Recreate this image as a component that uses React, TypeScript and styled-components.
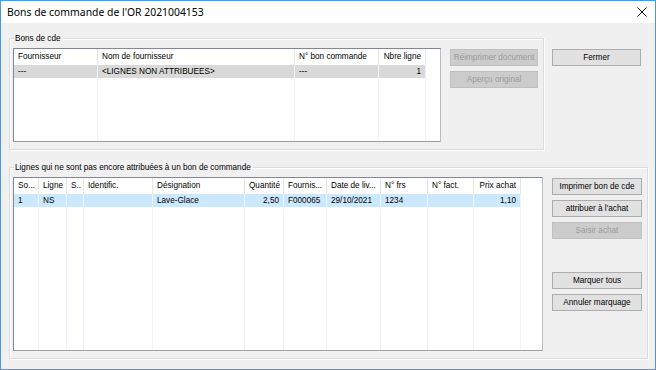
import React from "react";
import styled, { createGlobalStyle } from "styled-components";

const Global = createGlobalStyle`
  html, body { margin: 0; padding: 0; background: #f0f0f0; }
  * { box-sizing: border-box; }
`;

const Window = styled.div`
  width: 656px;
  height: 370px;
  border: 1px solid #4a98e0;
  background: #f0f0f0;
  display: flex;
  flex-direction: column;
  font-family: "Liberation Sans", Arial, sans-serif;
  font-size: 8.2px;
  color: #000;
  overflow: hidden;
`;

const TitleBar = styled.div`
  height: 22px;
  background: #fff;
  display: flex;
  align-items: center;
  justify-content: space-between;
  padding: 0 6px 0 6px;
  font-family: "Noto Sans", sans-serif;
  font-size: 10.4px;
  flex-shrink: 0;
`;

const CloseIcon = styled.svg`
  width: 10px;
  height: 10px;
  margin-right: 2px;
`;

const Body = styled.div`
  padding: 15px 0 0 8px;
  display: flex;
  flex-direction: column;
  gap: 17px;
`;

const Row = styled.div`
  display: flex;
  align-items: flex-start;
`;

const Group = styled.div<{ $w: number; $h: number; $pr: number }>`
  position: relative;
  width: ${(p) => p.$w}px;
  height: ${(p) => p.$h}px;
  border: 1px solid #dcdcdc;
  box-shadow: inset 1px 1px 0 #fff, 1px 1px 0 #fff;
  padding: 9px ${(p) => p.$pr}px 0 3px;
  display: flex;
  align-items: flex-start;
  gap: 9px;
`;

const GroupLabel = styled.span`
  position: absolute;
  top: -6px;
  left: 4px;
  padding: 0 2px 0 1px;
  background: #f0f0f0;
  line-height: 11px;
  white-space: nowrap;
`;

const ButtonColumn = styled.div<{ $w: number; $mt: number; $ml?: number }>`
  width: ${(p) => p.$w}px;
  margin-top: ${(p) => p.$mt}px;
  margin-left: ${(p) => p.$ml || 0}px;
  display: flex;
  flex-direction: column;
  gap: 5px;
  flex-shrink: 0;
`;

const Spacer = styled.div<{ $h: number }>`
  height: ${(p) => p.$h}px;
`;

const Button = styled.div<{ $disabled?: boolean }>`
  height: 17px;
  display: flex;
  align-items: center;
  justify-content: center;
  white-space: nowrap;
  border: 1px solid ${(p) => (p.$disabled ? "#bfbfbf" : "#adadad")};
  background: ${(p) => (p.$disabled ? "#cccccc" : "#e1e1e1")};
  color: ${(p) => (p.$disabled ? "#9a9a9a" : "#000")};
`;

const List = styled.div<{ $w: number; $h: number }>`
  width: ${(p) => p.$w}px;
  height: ${(p) => p.$h}px;
  border: 1px solid #828790;
  border-right-color: #b9bcc1;
  border-bottom-color: #a0a0a0;
  background: #fff;
  display: flex;
  flex-shrink: 0;
  overflow: hidden;
`;

const Column = styled.div<{ $w: number }>`
  width: ${(p) => p.$w}px;
  display: flex;
  flex-direction: column;
  flex-shrink: 0;
`;

const HeaderCell = styled.div<{ $align: string }>`
  height: 16px;
  line-height: 16px;
  padding: 0 4px 0 4px;
  border-right: 1px solid #e5e5e5;
  text-align: ${(p) => p.$align};
  white-space: nowrap;
  overflow: hidden;
`;

const ColumnBody = styled.div`
  flex: 1;
  border-right: 1px solid #eef4fb;
  display: flex;
  flex-direction: column;
`;

const Cell = styled.div<{ $align: string; $bg: string }>`
  height: 13px;
  line-height: 13px;
  padding: 0 4px 0 4px;
  background: ${(p) => p.$bg};
  text-align: ${(p) => p.$align};
  white-space: nowrap;
  overflow: hidden;
`;

type Col = { title: string; w: number; align?: "left" | "right" };

function ListView(props: {
  w: number;
  h: number;
  cols: Col[];
  rows: string[][];
  selBg: string;
}) {
  return (
    <List $w={props.w} $h={props.h}>
      {props.cols.map((c, i) => (
        <Column key={i} $w={c.w}>
          <HeaderCell $align={c.align || "left"}>{c.title}</HeaderCell>
          <ColumnBody>
            {props.rows.map((r, j) => (
              <Cell key={j} $align={c.align || "left"} $bg={props.selBg}>
                {r[i]}
              </Cell>
            ))}
          </ColumnBody>
        </Column>
      ))}
    </List>
  );
}

const cols1: Col[] = [
  { title: "Fournisseur", w: 84 },
  { title: "Nom de fournisseur", w: 197 },
  { title: "N° bon commande", w: 84 },
  { title: "Nbre ligne", w: 47, align: "right" },
];

const cols2: Col[] = [
  { title: "So...", w: 25 },
  { title: "Ligne", w: 28 },
  { title: "S..", w: 17 },
  { title: "Identific.", w: 69 },
  { title: "Désignation", w: 92 },
  { title: "Quantité", w: 39, align: "right" },
  { title: "Fournis...", w: 43 },
  { title: "Date de liv...", w: 54 },
  { title: "N° frs", w: 47 },
  { title: "N° fact.", w: 46 },
  { title: "Prix achat", w: 47, align: "right" },
];

export default function App() {
  return (
    <>
      <Global />
      <Window>
        <TitleBar>
          <span>Bons de commande de l'OR 2021004153</span>
          <CloseIcon viewBox="0 0 10 10">
            <path d="M0.5 0.5 L9.5 9.5 M9.5 0.5 L0.5 9.5" stroke="#111" strokeWidth="1" />
          </CloseIcon>
        </TitleBar>
        <Body>
          <Row>
            <Group $w={535} $h={112} $pr={4}>
              <GroupLabel>Bons de cde</GroupLabel>
              <ListView
                w={428}
                h={94}
                cols={cols1}
                rows={[["---", "<LIGNES NON ATTRIBUEES>", "---", "1"]]}
                selBg="#d9d9d9"
              />
              <ButtonColumn $w={88} $mt={1}>
                <Button $disabled>Réimprimer document</Button>
                <Button $disabled>Aperçu original</Button>
              </ButtonColumn>
            </Group>
            <ButtonColumn $w={89} $mt={11} $ml={8}>
              <Button>Fermer</Button>
            </ButtonColumn>
          </Row>
          <Group $w={639} $h={192} $pr={5}>
            <GroupLabel>Lignes qui ne sont pas encore attribuées à un bon de commande</GroupLabel>
            <ListView
              w={530}
              h={174}
              cols={cols2}
              rows={[["1", "NS", "", "", "Lave-Glace", "2,50", "F000065", "29/10/2021", "1234", "", "1,10"]]}
              selBg="#cce8ff"
            />
            <ButtonColumn $w={90} $mt={1}>
              <Button>Imprimer bon de cde</Button>
              <Button>attribuer à l'achat</Button>
              <Button $disabled>Saisir achat</Button>
              <Spacer $h={23} />
              <Button>Marquer tous</Button>
              <Button>Annuler marquage</Button>
            </ButtonColumn>
          </Group>
        </Body>
      </Window>
    </>
  );
}
